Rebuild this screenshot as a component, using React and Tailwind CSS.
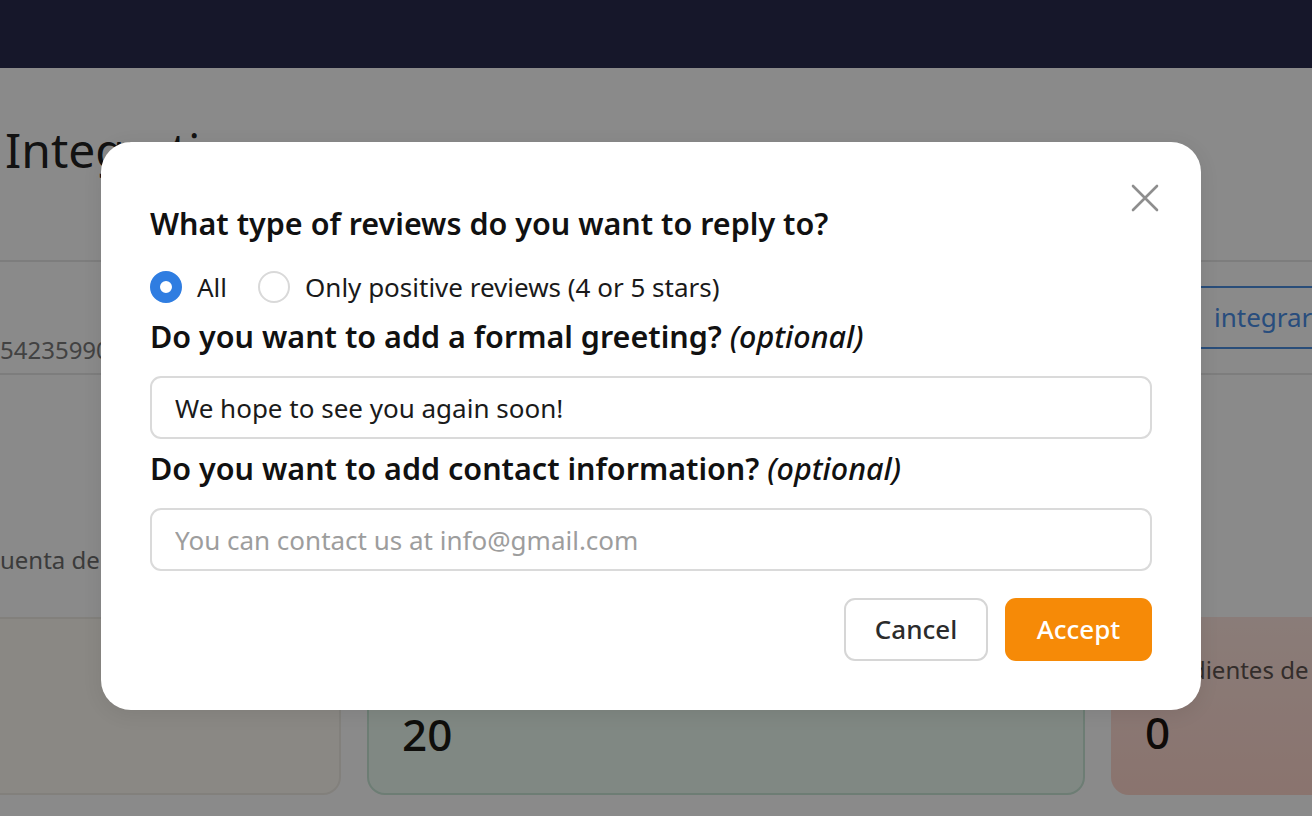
import React, { useState } from "react";

const font = { fontFamily: '"Noto Sans", "Open Sans", Arial, sans-serif' };

const Radio = ({ checked, label, onClick }) => (
  <button type="button" onClick={onClick} className="flex items-center gap-[15px]">
    {checked ? (
      <span className="w-[32px] h-[32px] rounded-full border-[10px] border-[#2f7de1] bg-white" />
    ) : (
      <span className="w-[32px] h-[32px] rounded-full border-2 border-[#d9d9d9] bg-white" />
    )}
    <span className="text-[26px] leading-[32px] text-[#1a1a1a]">{label}</span>
  </button>
);

const ReplyModal = () => {
  const [type, setType] = useState("all");
  const [greeting, setGreeting] = useState("We hope to see you again soon!");
  const [contact, setContact] = useState("");

  return (
    <div className="relative w-[1100px] bg-white rounded-[30px] px-[49px] pt-[61px] pb-[49px] shadow-[0_4px_20px_rgba(0,0,0,0.08)]">
      {/* close */}
      <button type="button" className="absolute top-[42px] right-[42px] w-[28px] h-[28px]">
        <svg viewBox="0 0 28 28" width="28" height="28" fill="none" stroke="#8e8e8e" strokeWidth="2.6" strokeLinecap="round">
          <path d="M2 2 L26 26 M26 2 L2 26" />
        </svg>
      </button>

      <h2 className="text-[30.5px] leading-[40px] font-semibold text-[#111]">
        What type of reviews do you want to reply to?
      </h2>

      <div className="flex items-center gap-[31px] mt-[28px]">
        <Radio checked={type === "all"} label="All" onClick={() => setType("all")} />
        <Radio
          checked={type === "positive"}
          label="Only positive reviews (4 or 5 stars)"
          onClick={() => setType("positive")}
        />
      </div>

      <h3 className="text-[30.5px] leading-[40px] font-semibold text-[#111] mt-[13px]">
        Do you want to add a formal greeting? <em className="font-medium">(optional)</em>
      </h3>
      <input
        value={greeting}
        onChange={(e) => setGreeting(e.target.value)}
        className="mt-[20px] w-full h-[63px] rounded-[11px] border-2 border-[#dadada] px-[23px] text-[26px] text-[#1a1a1a] outline-none"
        style={font}
      />

      <h3 className="text-[30.5px] leading-[40px] font-semibold text-[#111] mt-[9px]">
        Do you want to add contact information? <em className="font-medium">(optional)</em>
      </h3>
      <input
        value={contact}
        onChange={(e) => setContact(e.target.value)}
        placeholder="You can contact us at info@gmail.com"
        className="mt-[20px] w-full h-[63px] rounded-[11px] border-2 border-[#dadada] px-[23px] text-[26px] text-[#1a1a1a] placeholder:text-[#9d9d9d] outline-none"
        style={font}
      />

      <div className="flex justify-end gap-[17px] mt-[27px]">
        <button
          type="button"
          className="w-[144px] h-[63px] rounded-[11px] border-2 border-[#d6d6d6] bg-white text-[26px] font-medium text-[#2b2b2b]"
        >
          Cancel
        </button>
        <button
          type="button"
          className="w-[147px] h-[63px] rounded-[11px] bg-[#f68a07] text-[26px] font-medium text-white"
        >
          Accept
        </button>
      </div>
    </div>
  );
};

export default function App() {
  return (
    <div className="relative h-[816px] overflow-hidden bg-white" style={font}>
      <header className="h-[68px] bg-[#16172a]" />

      {/* page behind the dialog */}
      <main>
        <div className="h-[194px] pt-[52px] pl-[5px] border-b-2 border-[#e8e8e8]">
          <h1 className="text-[48px] leading-[60px] text-[#222]">Integrations</h1>
        </div>
        <div className="h-[113px] flex items-start justify-between border-b-2 border-[#e8e8e8]">
          <span className="mt-[70px] text-[24px] text-[#7a7a7a]">54235990</span>
          <span className="mt-[24px] -mr-[60px] w-[180px] h-[63px] border-2 border-[#4d8fe0] rounded-l-[8px] flex items-center pl-[20px] text-[26px] text-[#4a8ee8]">
            integrar
          </span>
        </div>
        <div className="h-[242px] flex items-end pb-[39px]">
          <span className="text-[24px] text-[#6e6e6e]">uenta de</span>
        </div>
        <div className="flex gap-[26px] -ml-[25px]">
          <div className="shrink-0 w-[366px] h-[178px] rounded-[18px] border-2 border-[#f1ede6] bg-[#fffcf4]" />
          <div className="shrink-0 w-[718px] h-[178px] rounded-[18px] border-2 border-[#c9e7d7] bg-[#ecfbf3] px-[33px] pt-[90px]">
            <span className="text-[44px] leading-[50px] font-medium text-[#1c1a16]">20</span>
          </div>
          <div className="shrink-0 w-[260px] h-[178px] rounded-[18px] bg-gradient-to-b from-[#ffe6df] to-[#ffd6cc] pl-[37px] pt-[36px]">
            <div className="text-[24px] leading-[34px] text-[#5e5450] whitespace-nowrap">Pendientes de</div>
            <div className="-ml-[3px] text-[44px] leading-[50px] font-medium text-[#1c1512] mt-[20px]">0</div>
          </div>
        </div>
      </main>

      {/* overlay + dialog */}
      <div className="absolute inset-x-0 bottom-0 top-[68px] bg-black/[0.46] flex items-start justify-center pt-[74px] pr-[10px]">
        <ReplyModal />
      </div>
    </div>
  );
}
